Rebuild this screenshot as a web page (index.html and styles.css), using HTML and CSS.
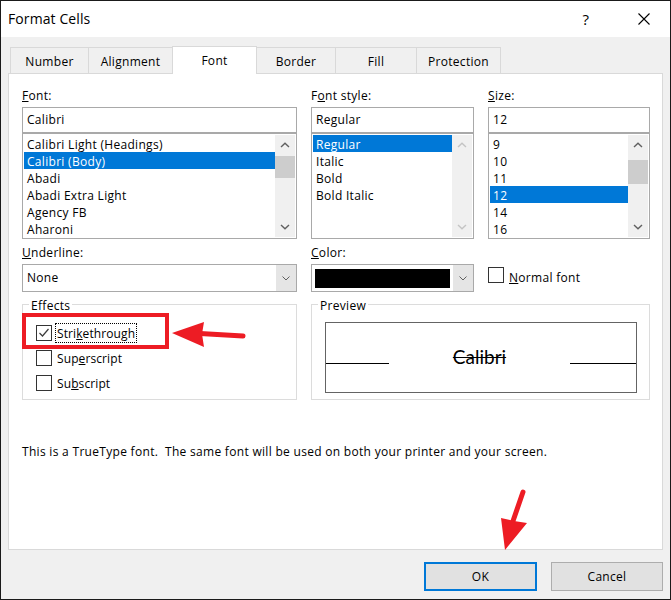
FILE: index.html
```html
<!DOCTYPE html>
<html>
<head>
<meta charset="utf-8">
<title>Format Cells</title>
<link rel="stylesheet" href="styles.css">
</head>
<body>
<div class="window">
  <div class="titlebar">
    <span class="title">Format Cells</span>
    <span class="help">?</span>
    <svg class="close" width="12" height="12" viewBox="0 0 12 12"><path d="M0.5 0.5 L11.5 11.5 M11.5 0.5 L0.5 11.5" stroke="#000" stroke-width="1.1" fill="none"/></svg>
  </div>

  <div class="tabs">
    <div class="tab w-number">Number</div>
    <div class="tab w-align">Alignment</div>
    <div class="tab w-font selected">Font</div>
    <div class="tab w-border">Border</div>
    <div class="tab w-fill">Fill</div>
    <div class="tab w-prot">Protection</div>
  </div>

  <div class="panel">
    <div class="grid">
      <div class="field">
        <div class="label"><u>F</u>ont:</div>
        <div class="input">Calibri</div>
        <div class="list">
          <div class="items">
            <div class="item">Calibri Light (Headings)</div>
            <div class="item sel">Calibri (Body)</div>
            <div class="item">Abadi</div>
            <div class="item">Abadi Extra Light</div>
            <div class="item">Agency FB</div>
            <div class="item">Aharoni</div>
          </div>
          <div class="sb">
            <div class="sb-btn"><svg width="10" height="6" viewBox="0 0 10 6"><path d="M1 5 L5 1.2 L9 5" stroke="#606060" stroke-width="1.4" fill="none"/></svg></div>
            <div class="sb-track"><div class="thumb thumb-font"></div></div>
            <div class="sb-btn"><svg width="10" height="6" viewBox="0 0 10 6"><path d="M1 1 L5 4.8 L9 1" stroke="#606060" stroke-width="1.4" fill="none"/></svg></div>
          </div>
        </div>
      </div>

      <div class="field">
        <div class="label">F<u>o</u>nt style:</div>
        <div class="input">Regular</div>
        <div class="list">
          <div class="items">
            <div class="item sel">Regular</div>
            <div class="item">Italic</div>
            <div class="item">Bold</div>
            <div class="item">Bold Italic</div>
          </div>
          <div class="sb">
            <div class="sb-btn"><svg width="10" height="6" viewBox="0 0 10 6"><path d="M1 5 L5 1.2 L9 5" stroke="#c4c4c4" stroke-width="1.4" fill="none"/></svg></div>
            <div class="sb-track"></div>
            <div class="sb-btn"><svg width="10" height="6" viewBox="0 0 10 6"><path d="M1 1 L5 4.8 L9 1" stroke="#c4c4c4" stroke-width="1.4" fill="none"/></svg></div>
          </div>
        </div>
      </div>

      <div class="field">
        <div class="label"><u>S</u>ize:</div>
        <div class="input">12</div>
        <div class="list">
          <div class="items">
            <div class="item">9</div>
            <div class="item">10</div>
            <div class="item">11</div>
            <div class="item sel">12</div>
            <div class="item">14</div>
            <div class="item">16</div>
          </div>
          <div class="sb">
            <div class="sb-btn"><svg width="10" height="6" viewBox="0 0 10 6"><path d="M1 5 L5 1.2 L9 5" stroke="#606060" stroke-width="1.4" fill="none"/></svg></div>
            <div class="sb-track"><div class="thumb thumb-size"></div></div>
            <div class="sb-btn"><svg width="10" height="6" viewBox="0 0 10 6"><path d="M1 1 L5 4.8 L9 1" stroke="#606060" stroke-width="1.4" fill="none"/></svg></div>
          </div>
        </div>
      </div>

      <div class="field row2">
        <div class="label"><u>U</u>nderline:</div>
        <div class="combo">
          <div class="combo-text">None</div>
          <div class="combo-btn"><svg width="8" height="5" viewBox="0 0 8 5"><path d="M0.5 0.5 L4 4 L7.5 0.5" stroke="#606060" stroke-width="1" fill="none"/></svg></div>
        </div>
      </div>

      <div class="field row2">
        <div class="label"><u>C</u>olor:</div>
        <div class="combo">
          <div class="swatch"></div>
          <div class="combo-btn"><svg width="8" height="5" viewBox="0 0 8 5"><path d="M0.5 0.5 L4 4 L7.5 0.5" stroke="#606060" stroke-width="1" fill="none"/></svg></div>
        </div>
      </div>

      <div class="normal row2">
        <span class="cb"></span>
        <span class="normal-label"><u>N</u>ormal font</span>
      </div>

      <div class="group effects">
        <div class="group-label">Effects</div>
        <div class="checks">
          <div class="check">
            <span class="cb"><svg width="14" height="14" viewBox="0 0 14 14"><path d="M2.5 7 L5.5 10 L11.5 3" stroke="#3c3c3c" stroke-width="1.2" fill="none"/></svg></span>
            <span class="check-label focus">Stri<u>k</u>ethrough</span>
          </div>
          <div class="check">
            <span class="cb"></span>
            <span class="check-label">Sup<u>e</u>rscript</span>
          </div>
          <div class="check">
            <span class="cb"></span>
            <span class="check-label">Su<u>b</u>script</span>
          </div>
        </div>
      </div>

      <div class="group preview">
        <div class="group-label">Preview</div>
        <div class="pv-box">
          <div class="pv-row">
            <div class="pv-line pv-left"></div>
            <span class="pv-text">Calibri</span>
            <div class="pv-line pv-right"></div>
          </div>
        </div>
      </div>
    </div>

    <p class="note">This is a TrueType font.&nbsp; The same font will be used on both your printer and your screen.</p>
  </div>

  <div class="buttons">
    <button class="btn ok">OK</button>
    <button class="btn cancel">Cancel</button>
  </div>

  <svg class="overlay" width="671" height="600" viewBox="0 0 671 600">
    <rect x="24" y="315" width="143" height="32" fill="none" stroke="#ed1c24" stroke-width="4"/>
    <line x1="200" y1="333.5" x2="243" y2="336" stroke="#ed1c24" stroke-width="5" stroke-linecap="round"/>
    <polygon points="172,333 204,322 202,334 204,347" fill="#ed1c24"/>
    <line x1="523" y1="492" x2="513" y2="521" stroke="#ed1c24" stroke-width="5" stroke-linecap="round"/>
    <polygon points="501,518 514,521 527,523 505,550" fill="#ed1c24"/>
  </svg>
</div>
</body>
</html>
```

FILE: styles.css
```css
* { box-sizing: border-box; }

html, body {
  margin: 0;
  padding: 0;
  background: #f0f0f0;
}

body {
  font-family: "Open Sans", "Noto Sans", sans-serif;
  font-size: 12px;
  letter-spacing: 0.3px;
  color: #000;
}

u { text-decoration: underline; text-underline-offset: 1px; }

.window {
  position: relative;
  width: 671px;
  height: 600px;
  border: 1px solid #1a1a1a;
  background: #f0f0f0;
  display: flex;
  flex-direction: column;
}

/* Title bar */
.titlebar {
  height: 36px;
  background: #fff;
  display: flex;
  align-items: center;
  padding-left: 7px;
  padding-right: 20px;
  flex: none;
}

.title {
  font-size: 14px;
  letter-spacing: 0.1px;
  flex: 1;
  margin-top: -1px;
}

.help {
  width: 10px;
  text-align: center;
  font-size: 15px;
  margin-top: -1px;
}

.close {
  margin-left: 47px;
  display: block;
}

/* Tabs */
.tabs {
  display: flex;
  align-items: flex-end;
  height: 26px;
  margin-top: 10px;
  padding-left: 9px;
  flex: none;
}

.tab {
  height: 26px;
  border: 1px solid #d9d9d9;
  border-bottom: none;
  margin-right: -1px;
  background: #f0f0f0;
  text-align: center;
  line-height: 22px;
  padding-top: 3px;
}

.tab.selected {
  position: relative;
  z-index: 2;
  height: 28px;
  margin-bottom: -1px;
  background: #fff;
  line-height: 22px;
  padding-top: 3px;
}

.w-number { width: 79px; }
.w-align { width: 85px; }
.w-font { width: 85px; }
.w-border { width: 80px; }
.w-fill { width: 82px; }
.w-prot { width: 85px; }

/* Panel */
.panel {
  flex: none;
  height: 477px;
  margin: 0 7px;
  background: #fff;
  border: 1px solid #d9d9d9;
  padding: 14px 12px 0 13px;
}

.grid {
  display: grid;
  grid-template-columns: 275px 163px 162px;
  column-gap: 14px;
  align-items: start;
}

.label {
  height: 16px;
  line-height: 16px;
  margin-bottom: 3px;
}

.input {
  height: 26px;
  border: 1px solid #a9a9a9;
  padding-left: 4px;
  line-height: 24px;
}

.list {
  height: 106px;
  border: 1px solid #a9a9a9;
  padding: 1px;
  display: flex;
}

.items {
  flex: 1;
  min-width: 0;
}

.item {
  height: 17px;
  line-height: 15px;
  padding: 2px 0 0 3px;
  white-space: nowrap;
}

.item.sel {
  background: #0078d7;
  color: #fff;
}

/* Scrollbar */
.sb {
  width: 20px;
  background: #f0f0f0;
  display: flex;
  flex-direction: column;
}

.sb-btn {
  height: 20px;
  display: flex;
  align-items: center;
  justify-content: center;
}

.sb-btn svg { display: block; }

.sb-track {
  flex: 1;
}

.thumb {
  background: #cdcdcd;
}

.thumb-font {
  margin-top: 1px;
  height: 22px;
}

.thumb-size {
  margin-top: 5px;
  height: 24px;
}

/* Row 2 */
.row2 { margin-top: 6px; }

.combo {
  height: 28px;
  border: 1px solid #a9a9a9;
  display: flex;
  align-items: stretch;
}

.combo-text {
  flex: 1;
  padding-left: 4px;
  line-height: 26px;
}

.combo-btn {
  width: 20px;
  background: #e5e5e5;
  display: flex;
  align-items: center;
  justify-content: center;
}

.combo-btn svg { display: block; }

.swatch {
  width: 135px;
  height: 19px;
  margin: 4px 3px 0 3px;
  background: #000;
}

.normal {
  display: flex;
  align-items: flex-start;
  padding-top: 22px;
}

.normal-label {
  margin: 3px 0 0 5px;
  line-height: 16px;
}

.cb {
  width: 16px;
  height: 16px;
  border: 1px solid #333;
  background: #fff;
  display: inline-flex;
  align-items: center;
  justify-content: center;
  flex: none;
}

.cb svg { display: block; }

/* Groups */
.group {
  margin-top: 12px;
  height: 96px;
  border: 1px solid #dcdcdc;
}

.preview { grid-column: 2 / span 2; }

.group-label {
  width: max-content;
  margin: -7px 0 0 6px;
  padding: 0 2px;
  background: #fff;
  line-height: 16px;
  height: 16px;
}

.checks {
  margin-top: 9px;
  padding-left: 13px;
  display: flex;
  flex-direction: column;
  gap: 5px;
}

.check {
  height: 20px;
  display: flex;
  align-items: center;
}

.check-label {
  margin-left: 3px;
  padding: 1px 1px 0 1px;
  border: 1px solid transparent;
  line-height: 17px;
  letter-spacing: 0.1px;
}

.check-label.focus {
  border: 1px dotted #000;
}

.pv-box {
  margin: 8px 0 0 13px;
  width: 312px;
  height: 71px;
  border: 1px solid #646464;
}

.pv-row {
  display: flex;
  align-items: baseline;
  justify-content: space-between;
  margin-top: 24px;
}

.pv-line {
  height: 1px;
  background: #000;
}

.pv-left { width: 63px; }
.pv-right { width: 66px; }

.pv-text {
  font-family: "Lato", "Liberation Sans", sans-serif;
  font-size: 19px;
  letter-spacing: 0;
  line-height: 20px;
  text-decoration: line-through;
  text-decoration-thickness: 1px;
}

.note {
  margin: 44px 0 0 0;
  line-height: 16px;
  white-space: nowrap;
}

/* Buttons */
.buttons {
  display: flex;
  justify-content: flex-end;
  gap: 14px;
  margin-top: 12px;
  padding-right: 7px;
  flex: none;
}

.btn {
  height: 29px;
  background: #e1e1e1;
  border: 1px solid #adadad;
  font-family: "Open Sans", "Noto Sans", sans-serif;
  font-size: 12px;
  letter-spacing: 0.3px;
  color: #000;
  padding: 0;
  margin: 0;
}

.btn.ok {
  width: 113px;
  border: 2px solid #0078d7;
}

.btn.cancel {
  width: 112px;
}

.overlay {
  position: absolute;
  left: -1px;
  top: -1px;
  pointer-events: none;
}
```
